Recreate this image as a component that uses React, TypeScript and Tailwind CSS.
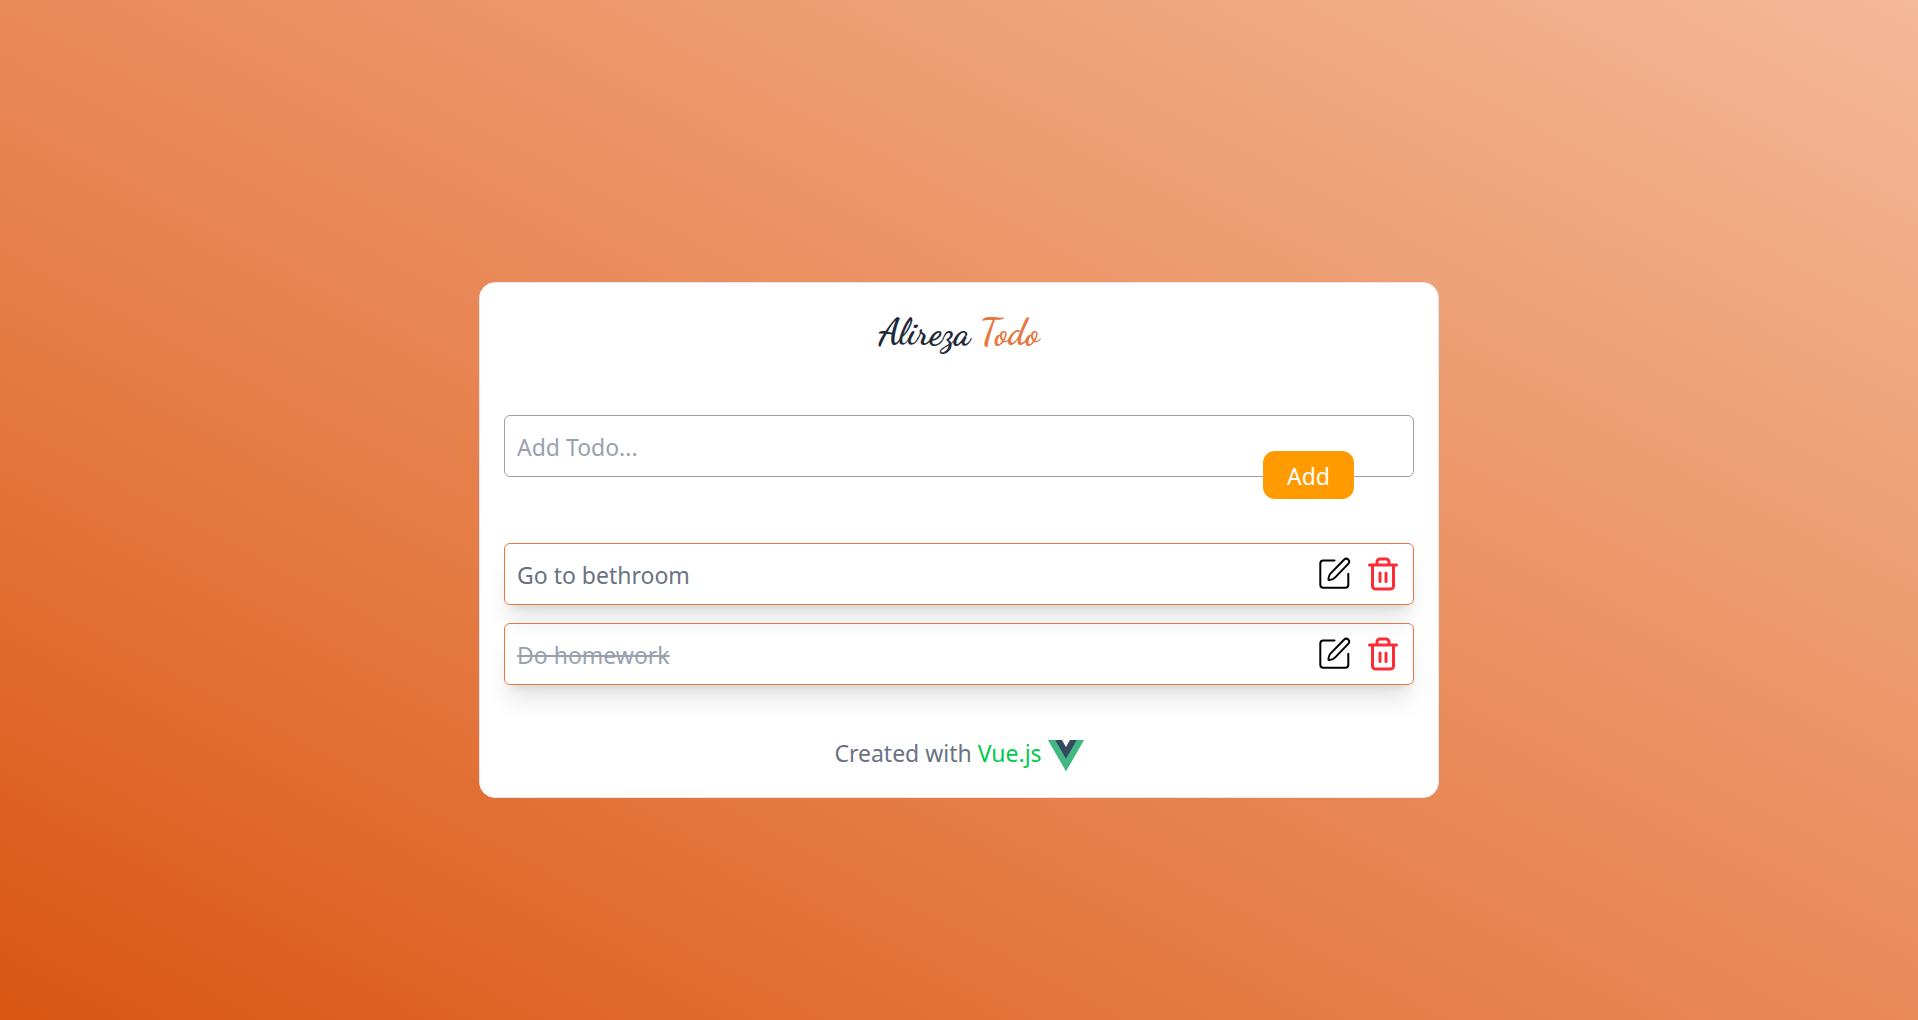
import { useState } from "react";

type Todo = { id: number; title: string; done: boolean };

const initialTodos: Todo[] = [
  { id: 1, title: "Go to bethroom", done: false },
  { id: 2, title: "Do homework", done: true },
];

function EditIcon() {
  return (
    <svg width="32" height="34" viewBox="0 0 32 34" fill="none" stroke="#000" strokeWidth="2" strokeLinecap="round" strokeLinejoin="round" aria-hidden="true">
      <path d="M15.500 3.500H4.300a3 3 0 0 0-3 3v21.200a3 3 0 0 0 3 3h22a3 3 0 0 0 3-3V16.800" />
      <path d="M9.600 22.900c-.4-2.600.5-5 2.300-6.800L25 2.700c1.300-1.200 3.100-1.200 4.300-.1 1.100 1.200 1.100 3-.1 4.300L16.200 20.400c-1.700 1.800-4 2.800-6.600 2.500Z" />
    </svg>
  );
}

function TrashIcon() {
  return (
    <svg width="32" height="36" viewBox="0 0 32 36" fill="none" stroke="currentColor" strokeWidth="3" strokeLinecap="round" strokeLinejoin="round" aria-hidden="true">
      <path d="M2.500 9h27M5.500 9v21a3 3 0 0 0 3 3h15a3 3 0 0 0 3-3V9M10 9V6a3 3 0 0 1 3-3h6a3 3 0 0 1 3 3v3" />
      <path d="M13 17v8.500M19 17v8.500" />
    </svg>
  );
}

function VueLogo() {
  return (
    <svg width="36" height="31" viewBox="0 0 256 221" aria-hidden="true">
      <path fill="#41b883" d="M204.800 0H256L128 220.800 0 0h97.920L128 51.200 157.440 0z" />
      <path fill="#41b883" d="m0 0 128 220.800L256 0h-51.200L128 132.480 50.560 0z" />
      <path fill="#35495e" d="M50.560 0 128 133.120 204.800 0h-47.360L128 51.200 97.920 0z" />
    </svg>
  );
}

export default function App() {
  const [todos, setTodos] = useState(initialTodos);
  const [draft, setDraft] = useState("");

  const addTodo = () => {
    if (!draft.trim()) return;
    setTodos([...todos, { id: Date.now(), title: draft, done: false }]);
    setDraft("");
  };

  return (
    <div className="flex min-h-screen items-center justify-center bg-[linear-gradient(to_top_right,#d95612,#e57a43_33%,#f4b998)] pt-15 font-['Segoe_UI','Noto_Sans',sans-serif] text-[23px] leading-8 text-gray-500">
      <main className="w-full max-w-240 rounded-2xl border border-gray-200 bg-white p-6">
        <h1 className="pt-0.5 text-center font-['Dancing_Script','Lato',cursive] text-4xl leading-12 font-bold text-gray-800">
          Alireza <span className="text-[#e57840]">Todo</span>
        </h1>

        <form
          className="relative mt-[58px]"
          onSubmit={(event) => {
            event.preventDefault();
            addTodo();
          }}
        >
          <input
            type="text"
            aria-label="Add Todo"
            placeholder="Add Todo..."
            value={draft}
            onChange={(event) => setDraft(event.target.value)}
            className="block h-[62px] w-full rounded-md border border-gray-400 px-3 pt-0.5 placeholder:text-gray-400"
          />
          <button type="submit" className="absolute right-15 -bottom-[22px] h-12 rounded-xl bg-[#ff9a00] px-6 pt-0.5 text-white">
            Add
          </button>
        </form>

        <ul className="mt-[66px] flex flex-col gap-[18px]">
          {todos.map((todo) => (
            <li key={todo.id} className="flex h-[62px] items-center justify-between rounded-md border border-[#e57840] pr-3.5 pl-3 shadow-xl">
              <span className={todo.done ? "pt-0.5 text-gray-400 line-through" : "pt-0.5"}>{todo.title}</span>
              <span className="flex items-center gap-4">
                <button type="button" aria-label={`Edit ${todo.title}`}>
                  <EditIcon />
                </button>
                <button
                  type="button"
                  aria-label={`Delete ${todo.title}`}
                  className="text-[#fb2c36]"
                  onClick={() => setTodos(todos.filter((item) => item.id !== todo.id))}
                >
                  <TrashIcon />
                </button>
              </span>
            </li>
          ))}
        </ul>

        <p className="mt-13 flex h-9 items-center justify-center gap-1.5">
          <span className="pb-1">
            Created with <span className="text-[#00c950]">Vue.js</span>
          </span>
          <VueLogo />
        </p>
      </main>
    </div>
  );
}
